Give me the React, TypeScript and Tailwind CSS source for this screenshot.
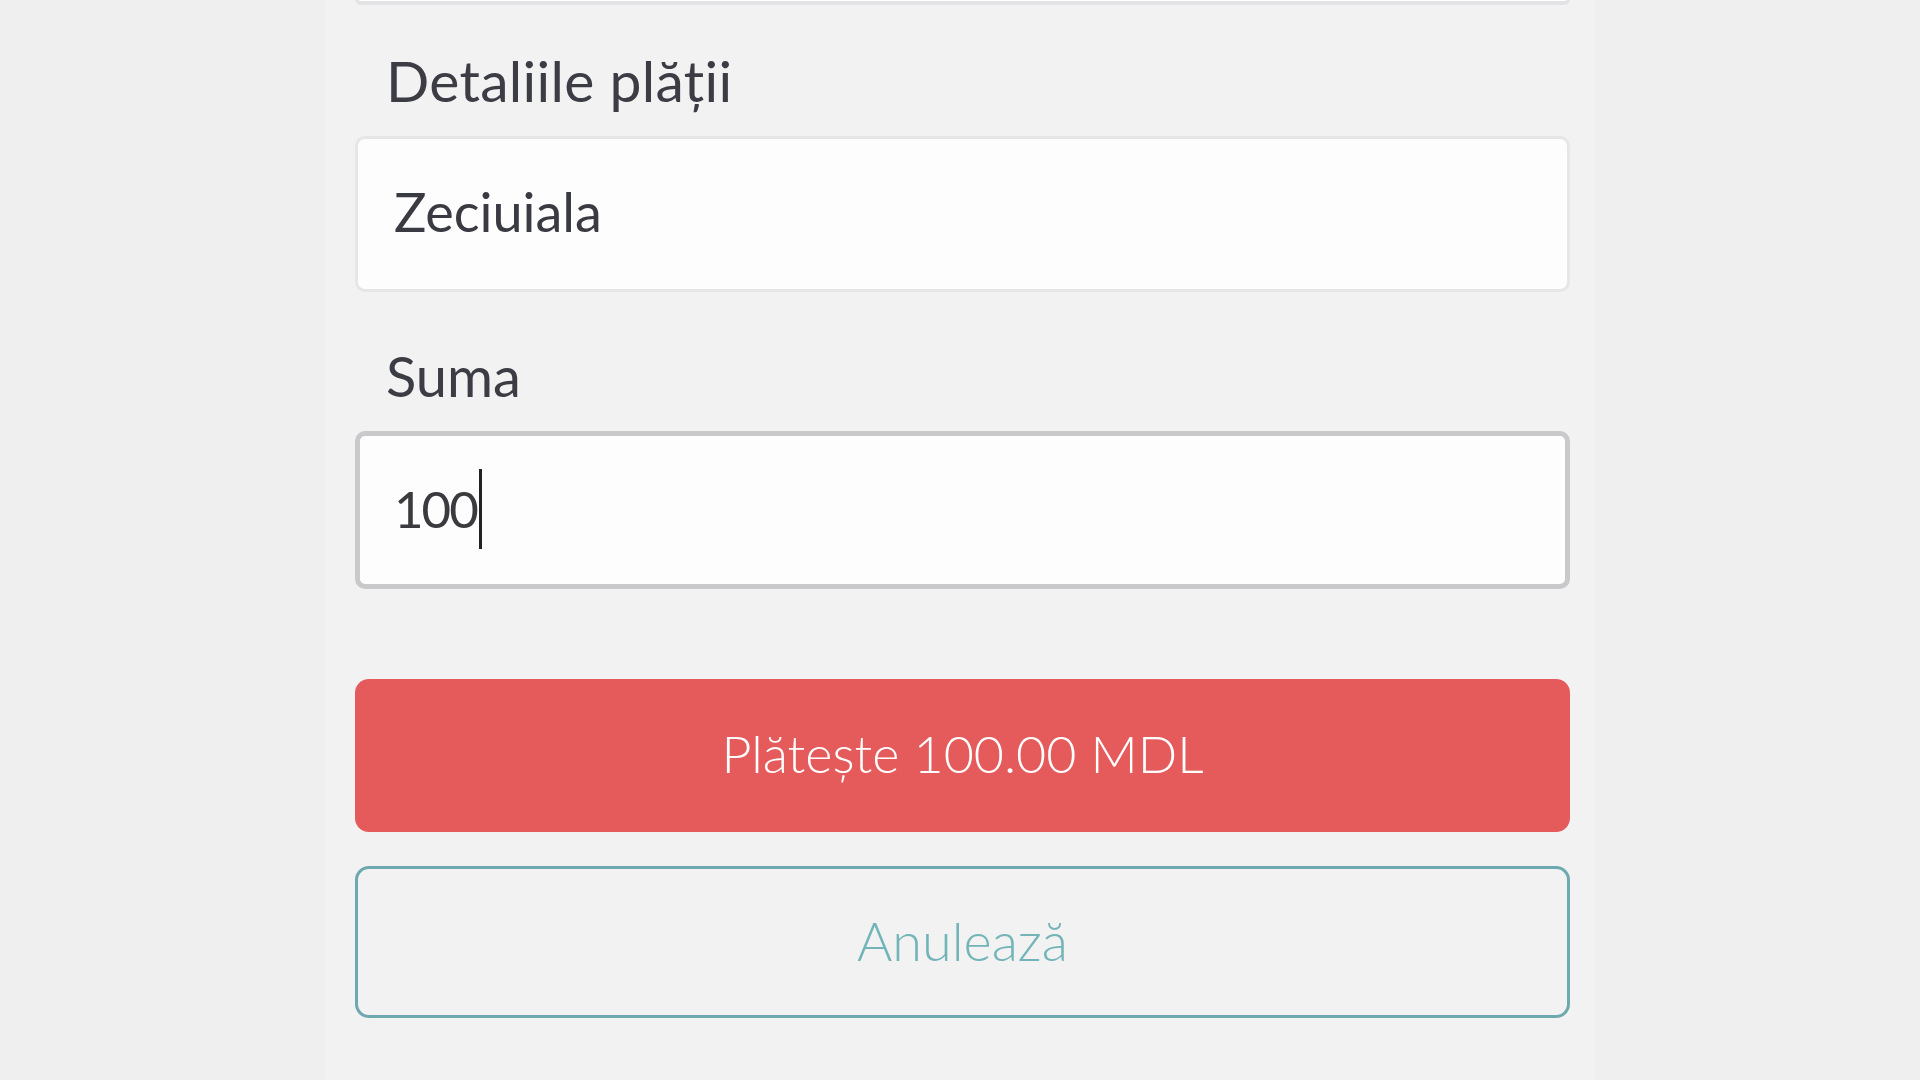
export default function App() {
  return (
    <div className="min-h-screen w-full bg-[#efefef] flex justify-center font-['Lato','Open_Sans',sans-serif]">
      <div className="w-[1270px] min-h-screen bg-[#f2f2f3] pl-[30px] pr-[25px] flex flex-col">
        {/* bottom edge of previous field */}
        <div className="h-[6px] -mt-px border-x-[3px] border-b-[4px] border-[#e3e3e5] rounded-b-lg bg-white" />

        <label className="mt-[43px] ml-[31px] text-[57px] leading-[64px] tracking-[0.3px] text-[#3c3c44]">
          Detaliile plății
        </label>
        <div className="mt-[24px] h-[156px] rounded-[10px] border-[3px] border-[#e6e6e8] bg-[#fdfdfd] flex items-center pl-[36px] pb-[5px]">
          <span className="text-[54px] leading-[64px] text-[#3a3a42]">Zeciuiala</span>
        </div>

        <label className="mt-[52px] ml-[31px] text-[56px] leading-[64px] text-[#3c3c44]">
          Suma
        </label>
        <div className="mt-[23px] h-[158px] rounded-[10px] border-[5px] border-[#c9c9cb] bg-[#fdfdfd] flex items-center pl-[34px] pb-[3px]">
          <span className="text-[51px] leading-[64px] text-[#3a3a3f] tracking-[-2px]">100</span>
          <span className="w-[3px] h-[80px] bg-[#222] ml-[2px]" />
        </div>

        <button className="mt-[90px] h-[153px] rounded-[14px] bg-[#e55a5b] text-white text-[52px] font-light pb-[6px]">
          Plătește 100.00 MDL
        </button>
        <button className="mt-[34px] h-[152px] rounded-[14px] border-[3px] border-[#6da9ae] bg-transparent text-[#72b4b7] text-[54px] font-light pb-[4px]">
          Anulează
        </button>
      </div>
    </div>
  );
}
